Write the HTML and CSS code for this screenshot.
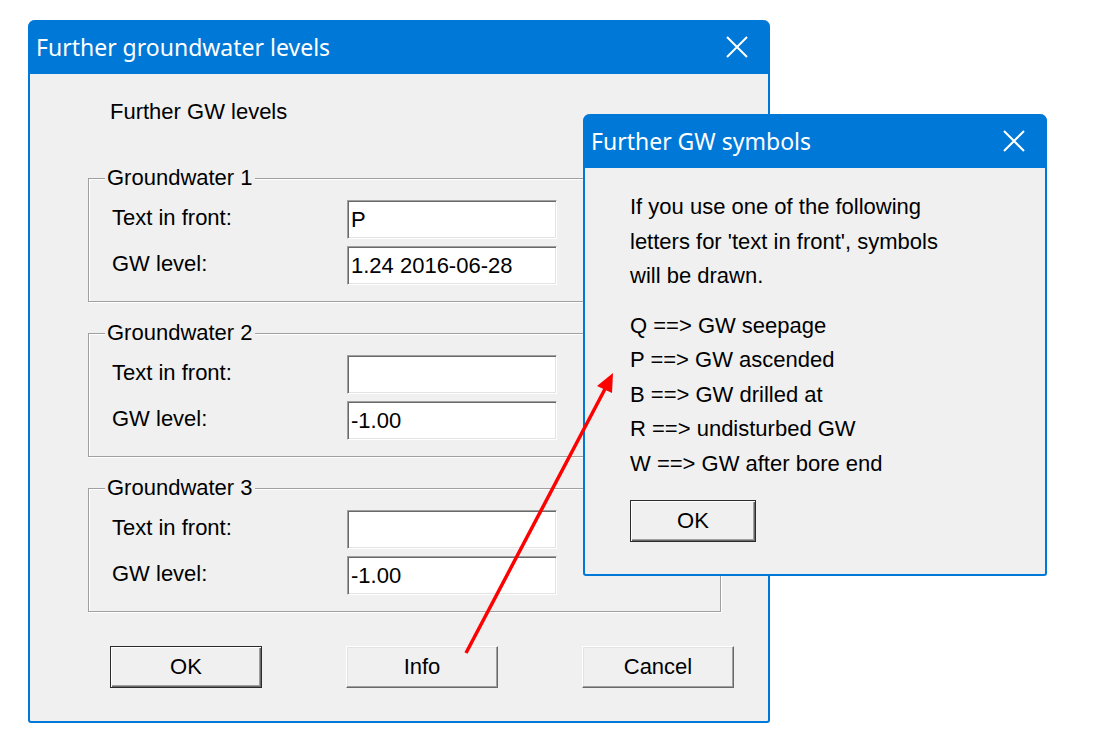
FILE: index.html
```html
<!DOCTYPE html>
<html lang="en">
<head>
	<meta charset="UTF-8">
	<title>Further groundwater levels</title>
	<link rel="stylesheet" href="styles.css">
</head>
<body>
	<div class="desk">
		<!-- main dialog -->
		<div class="dlg main">
			<div class="cap">
				<span class="cap-title">Further groundwater levels</span>
				<svg class="cap-close" width="22" height="22" viewBox="0 0 22 22"><path d="M1 1L21 21M21 1L1 21" stroke="#fff" stroke-width="2" fill="none"/></svg>
			</div>
			<div class="main-body">
				<p class="intro">Further GW levels</p>
				<fieldset class="grp">
					<legend>Groundwater 1</legend>
					<div class="row"><label>Text in front:</label><input type="text" class="fld" value="P"></div>
					<div class="row"><label>GW level:</label><input type="text" class="fld" value="1.24 2016-06-28"></div>
				</fieldset>
				<fieldset class="grp">
					<legend>Groundwater 2</legend>
					<div class="row"><label>Text in front:</label><input type="text" class="fld" value=""></div>
					<div class="row"><label>GW level:</label><input type="text" class="fld" value="-1.00"></div>
				</fieldset>
				<fieldset class="grp">
					<legend>Groundwater 3</legend>
					<div class="row"><label>Text in front:</label><input type="text" class="fld" value=""></div>
					<div class="row"><label>GW level:</label><input type="text" class="fld" value="-1.00"></div>
				</fieldset>
				<div class="btns">
					<button class="btn def">OK</button>
					<button class="btn">Info</button>
					<button class="btn">Cancel</button>
				</div>
			</div>
		</div>

		<!-- info popup -->
		<div class="dlg pop">
			<div class="cap">
				<span class="cap-title">Further GW symbols</span>
				<svg class="cap-close" width="22" height="22" viewBox="0 0 22 22"><path d="M1 1L21 21M21 1L1 21" stroke="#fff" stroke-width="2" fill="none"/></svg>
			</div>
			<div class="pop-body">
				<p class="lines">If you use one of the following<br>letters for 'text in front', symbols<br>will be drawn.</p>
				<ul class="lines codes">
					<li>Q ==&gt; GW seepage</li>
					<li>P ==&gt; GW ascended</li>
					<li>B ==&gt; GW drilled at</li>
					<li>R ==&gt; undisturbed GW</li>
					<li>W ==&gt; GW after bore end</li>
				</ul>
				<button class="btn def small">OK</button>
			</div>
		</div>

		<!-- pointer from Info to popup -->
		<svg class="arrow" width="1120" height="732" viewBox="0 0 1120 732">
			<line x1="466" y1="653" x2="605" y2="389" stroke="#f00" stroke-width="3.5"/>
			<polygon points="613,373 597,386 612,393" fill="#f00"/>
		</svg>
	</div>
</body>
</html>
```

FILE: styles.css
```css
*{
	box-sizing: border-box;
	margin: 0;
	padding: 0;
}
body{
	background: #fff;
	font-family: "Liberation Sans", Arial, sans-serif;
	font-size: 22px;
	color: #000;
}
.desk{
	position: relative;
	width: 1120px;
	height: 732px;
	overflow: hidden;
}
/* windows */
.dlg{
	position: absolute;
	background: #f0f0f0;
	border: 2px solid #0078d7;
	border-top: 0;
	border-radius: 7px 7px 3px 3px;
}
.main{
	left: 28px;
	top: 20px;
	width: 742px;
	height: 703px;
}
.pop{
	left: 583px;
	top: 114px;
	width: 464px;
	height: 462px;
}
.cap{
	height: 54px;
	margin: 0 -2px;
	padding: 0 22px 0 8px;
	background: #0078d7;
	border-radius: 7px 7px 0 0;
	display: flex;
	align-items: center;
	justify-content: space-between;
	color: #fff;
	font-family: "Noto Sans", "Open Sans", sans-serif;
	font-size: 23px;
}
.cap-close{
	display: block;
}
/* main dialog body */
.main-body{
	padding: 26px 47px 0 58px;
}
.intro{
	line-height: 24px;
	margin-left: 22px;
	margin-bottom: 42px;
}
.grp{
	border: 1px solid #a0a0a0;
	box-shadow: inset 1px 1px 0 #fff, 1px 1px 0 #fff;
	padding: 10px 0 16px 0;
	margin-bottom: 19px;
}
.grp legend{
	margin-left: 16px;
	padding: 0 2px;
	line-height: 24px;
	background: #f0f0f0;
}
.row{
	display: flex;
	align-items: center;
	padding-left: 23px;
}
.row + .row{
	margin-top: 7px;
}
.row label{
	width: 235px;
	padding-bottom: 4px;
}
.fld{
	width: 210px;
	height: 39px;
	padding: 0 3px;
	font: inherit;
	color: #000;
	background: #fff;
	border: 1px solid;
	border-color: #a0a0a0 #fff #fff #a0a0a0;
	box-shadow: inset 1px 1px 0 #696969, inset -1px -1px 0 #e3e3e3;
	outline: none;
}
.btns{
	display: flex;
	gap: 84px;
	margin-top: 34px;
	padding-left: 22px;
}
.btn{
	flex: none;
	width: 152px;
	height: 42px;
	font: inherit;
	color: #000;
	background: #f0f0f0;
	border: 1px solid;
	border-color: #fff #696969 #696969 #fff;
	box-shadow: inset -1px -1px 0 #a0a0a0, inset 1px 1px 0 #e3e3e3;
}
.btn.def{
	border: 1px solid #2b2b2b;
	box-shadow: inset 1px 1px 0 #fff, inset -1px -1px 0 #696969, inset -2px -2px 0 #a0a0a0;
}
.btn.small{
	width: 126px;
}
/* popup body */
.pop-body{
	padding: 22px 0 0 45px;
}
.lines{
	line-height: 34.5px;
}
.codes{
	list-style: none;
	margin-top: 15px;
	margin-bottom: 19px;
}
.arrow{
	position: absolute;
	left: 0;
	top: 0;
	pointer-events: none;
}
```
